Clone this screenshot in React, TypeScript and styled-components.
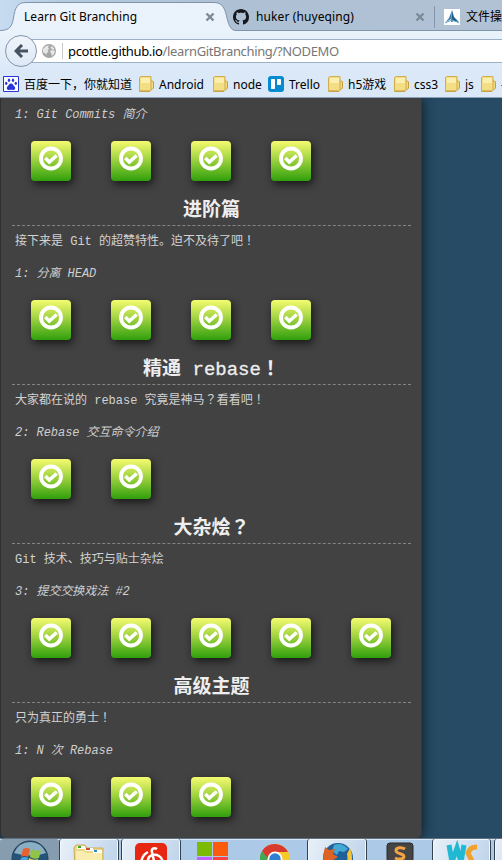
import React from "react";
import styled, { createGlobalStyle } from "styled-components";

const GlobalStyle = createGlobalStyle`
  * { box-sizing: border-box; }
  body { margin: 0; overflow: hidden; background: #274b64; }
`;

const Screen = styled.div`
  width: 502px;
  height: 860px;
  display: flex;
  flex-direction: column;
  overflow: hidden;
  background: #274b64;
  font: 12px/18px "Noto Sans", "Noto Sans CJK SC", sans-serif;
  color: #000;
`;

/* browser chrome */
const TabStrip = styled.div`
  height: 31px;
  flex: none;
  display: flex;
  background: linear-gradient(90deg, #c7dcf1 0, #b6cbe0 60px, #aec0d4 230px, #b1c2d5 100%);
  border-bottom: 1px solid #7f95ae;
`;
const ActiveTab = styled.div`
  position: relative;
  width: 233px;
  height: 31px;
  flex: none;
  display: flex;
  align-items: center;
  padding: 3px 0 0 24px;
`;
const TabShape = styled.svg`
  position: absolute;
  left: 0;
  top: 0;
`;
const Tab = styled.div<{ $w: number }>`
  width: ${(p) => p.$w}px;
  flex: none;
  height: 30px;
  display: flex;
  align-items: center;
  padding-top: 3px;
  white-space: nowrap;
`;
const TabTitle = styled.span<{ $w: number; $ls?: number }>`
  position: relative;
  width: ${(p) => p.$w}px;
  flex: none;
  white-space: nowrap;
  letter-spacing: ${(p) => p.$ls ?? 0}px;
`;
const Glyph = styled.svg<{ $mr?: number }>`
  position: relative;
  display: block;
  flex: none;
  margin-right: ${(p) => p.$mr ?? 0}px;
`;
const TabDivider = styled.i`
  width: 1px;
  height: 22px;
  margin: 0 9px 0 9px;
  background: #8696aa;
`;

const NavBar = styled.div`
  height: 39px;
  flex: none;
  display: flex;
  align-items: center;
  padding-left: 5px;
  background: linear-gradient(#eaf2fb, #dce9f7);
`;
const BackButton = styled.div`
  position: relative;
  z-index: 1;
  width: 32px;
  height: 32px;
  border: 1px solid #8496ab;
  border-radius: 50%;
  background: linear-gradient(#f0f5fb, #dce8f5);
  display: grid;
  place-items: center;
  flex: none;
`;
const UrlBox = styled.div`
  flex: 1;
  height: 24px;
  margin-left: -10px;
  padding-left: 15px;
  display: flex;
  align-items: center;
  border: solid #9bb1c8;
  border-width: 1px 0;
  background: #fff;
`;
const UrlDivider = styled.i`
  width: 1px;
  height: 16px;
  margin: 0 5px 0 6px;
  background: #c8c8c8;
`;
const Url = styled.span`
  font-size: 13px;
  letter-spacing: -0.35px;
  padding-top: 1px;
  color: #777;
  white-space: nowrap;
  b { font-weight: 400; color: #000; }
`;

const Bookmarks = styled.div`
  height: 28px;
  flex: none;
  display: flex;
  align-items: center;
  padding: 1px 0 0 3px;
  overflow: hidden;
  background: #dae8f7;
  border-bottom: 1px solid #8aa0b6;
`;
const Bookmark = styled.div<{ $w: number }>`
  width: ${(p) => p.$w}px;
  flex: none;
  display: flex;
  align-items: center;
  white-space: nowrap;
`;
const BookmarkLabel = styled.span`
  padding-top: 1px;
`;

/* level list */
const Page = styled.main`
  height: 740px;
  flex: none;
  background: #274b64;
  overflow: hidden;
`;
const Panel = styled.section`
  width: 422px;
  height: 740px;
  padding: 7px 11px 0 11px;
  background: #424242;
  border-left: 1px solid #303030;
  border-right: 1px solid #383838;
  border-radius: 0 0 5px 5px;
  box-shadow: 0 0 13px #071722;
  font: 12px/20px "Liberation Mono", "Noto Sans CJK SC", monospace;
  color: #d2d2d2;
`;
const Sequence = styled.article<{ $first?: boolean }>`
  height: ${(p) => (p.$first ? 91 : 159)}px;
`;
const Heading = styled.h3`
  margin: 0;
  width: 399px;
  height: 30px;
  padding-top: 2px;
  border-bottom: 1px dashed #848484;
  font-size: 19px;
  line-height: 26px;
  font-weight: 700;
  color: #eee;
  text-align: center;
  white-space: pre;
`;
const Latin = styled.span`
  font-weight: 400;
  -webkit-text-stroke: 0.3px #eee;
`;
const Mark = styled.span`
  font-family: "Noto Sans CJK TC", sans-serif;
  line-height: 0;
`;
const About = styled.p`
  margin: 0;
  height: 38px;
  padding: 6px 0 0 3px;
  white-space: pre;
`;
const LevelName = styled.p`
  margin: 0;
  height: 20px;
  padding-left: 3px;
  font-style: italic;
  letter-spacing: -0.04px;
  color: #cfcfcf;
  white-space: pre;
`;
const Levels = styled.div`
  display: flex;
  gap: 40px;
  padding: 16px 0 0 19px;
`;
const Level = styled.div`
  width: 40px;
  height: 40px;
  flex: none;
  display: flex;
  justify-content: center;
  padding-top: 5px;
  border-radius: 4px;
  background: linear-gradient(#f5fb70, #a5d543 43%, #309f0c);
  box-shadow: 2px 3px 9px rgba(0, 0, 0, 0.68);
`;

/* taskbar */
const Taskbar = styled.footer`
  height: 22px;
  flex: none;
  display: flex;
  overflow: hidden;
  background: #acc9e7;
  border-top: 1px solid #5d7183;
  box-shadow: inset 0 1px #d8e7f5;
`;
const Task = styled.div<{ $w: number; $open?: boolean; $start?: boolean }>`
  width: ${(p) => p.$w}px;
  height: 30px;
  flex: none;
  display: flex;
  justify-content: center;
  padding-top: 1px;
  border: solid ${(p) => (p.$open ? "#34424f" : "transparent")};
  border-width: 0 1px;
  border-radius: 3px 3px 0 0;
  background: ${(p) =>
    p.$start ? "#869caf" : p.$open ? "linear-gradient(110deg, #e8f0f8, #bdd3ea)" : "transparent"};
  box-shadow: ${(p) => (p.$open ? "inset 0 0 0 1px #f2f7fb" : "none")};
`;

const Close = () => (
  <Glyph width="10" height="10" viewBox="0 0 10 10">
    <path d="M1.5 1.5L8.5 8.5M8.5 1.5L1.5 8.5" stroke="#7c8997" strokeWidth="2.4" />
  </Glyph>
);

const Folder = () => (
  <Glyph $mr={4} width="16" height="16" viewBox="0 0 16 16">
    <path d="M11 5h2.500l1 1v6l-1.500 1.500h-2" fill="#f3d979" stroke="#c59d3a" />
    <path d="M.5 1.500L2 .5h10v14l-1 1H.5z" fill="#f3de86" stroke="#d0ad50" />
    <path d="M2 2h9v5H2z" fill="#fbefae" />
    <path d="M1 15h10" stroke="#bf963c" />
  </Glyph>
);

const Done = () => (
  <svg width="26" height="26" viewBox="0 0 26 26" fill="none" stroke="#fff">
    <circle cx="13" cy="12.5" r="10" strokeWidth="3.8" />
    <path d="M7.300 12l4 4 7.400-6.500" strokeWidth="3.5" />
  </svg>
);

/* full-width ！ and ？ sit in the middle of their cell */
const withMarks = (text: string) =>
  text.split(/([！？])/).map((part, i) => (/[！？]/.test(part) ? <Mark key={i}>{part}</Mark> : part));

type SequenceData = { title?: React.ReactNode; about?: string; name: string; count: number };
const sequences: SequenceData[] = [
  { name: "1: Git Commits 简介", count: 4 },
  { title: "进阶篇", about: "接下来是 Git 的超赞特性。迫不及待了吧！", name: "1: 分离 HEAD", count: 4 },
  {
    title: <>精通<Latin> rebase</Latin><Mark>！</Mark></>,
    about: "大家都在说的 rebase 究竟是神马？看看吧！",
    name: "2: Rebase 交互命令介绍",
    count: 2,
  },
  { title: <>大杂烩<Mark>？</Mark></>, about: "Git 技术、技巧与贴士杂烩", name: "3: 提交交换戏法 #2", count: 5 },
  { title: "高级主题", about: "只为真正的勇士！", name: "1: N 次 Rebase", count: 3 },
];

const folders: [string, number][] = [
  ["Android", 74],
  ["node", 55],
];
const moreFolders: [string, number][] = [
  ["h5游戏", 66],
  ["css3", 51],
  ["js", 36],
  ["-", 40],
];

export default function App() {
  return (
    <Screen>
      <GlobalStyle />
      <TabStrip>
        <ActiveTab>
          <TabShape width="236" height="31" viewBox="0 0 236 31">
            <path
              d="M0 30.5C10 30.5 12 26 13.5 18C15 8 17 2.500 26 2.500H214C223 2.500 225 9 227 18C229 26 231 30.500 236 30.500V31H0Z"
              fill="#eaf2fb"
            />
            <path
              d="M0 30.500C10 30.500 12 26 13.500 18C15 8 17 2.500 26 2.500H214C223 2.500 225 9 227 18C229 26 231 30.500 236 30.500"
              fill="none"
              stroke="#8094ab"
            />
          </TabShape>
          <TabTitle $w={181} $ls={0.04}>Learn Git Branching</TabTitle>
          <Close />
        </ActiveTab>
        <Tab $w={269}>
          <Glyph $mr={7} width="16" height="16" viewBox="0 0 16 16">
            <path
              fill="#15191d"
              d="M8 0C3.58 0 0 3.58 0 8c0 3.54 2.29 6.53 5.47 7.59.4.07.55-.17.55-.38 0-.19-.01-.82-.01-1.49-2.01.37-2.53-.49-2.69-.94-.09-.23-.48-.94-.82-1.13-.28-.15-.68-.52-.01-.53.63-.01 1.08.58 1.23.82.72 1.21 1.87.87 2.33.66.07-.52.28-.87.51-1.07-1.78-.2-3.64-.89-3.64-3.95 0-.87.31-1.59.82-2.15-.08-.2-.36-1.02.08-2.12 0 0 .67-.21 2.2.82.64-.18 1.32-.27 2-.27s1.36.09 2 .27c1.53-1.04 2.2-.82 2.2-.82.44 1.1.16 1.92.08 2.12.51.56.82 1.27.82 2.15 0 3.07-1.87 3.75-3.65 3.95.29.25.54.73.54 1.48 0 1.07-.01 1.93-.01 2.2 0 .21.15.46.55.38A8.01 8.01 0 0016 8c0-4.420-3.580-8-8-8z"
            />
          </Glyph>
          <TabTitle $w={159} $ls={0.1}>huker (huyeqing)</TabTitle>
          <Close />
          <TabDivider />
          <Glyph $mr={6} width="16" height="16" viewBox="0 0 16 16">
            <path d="M0 0h16v16H0z" fill="#fff" />
            <path d="M8 1L7 10l-6 4 4-5z" fill="#3e82ad" />
            <path d="M8 1l2 7 5 5-5-1-3 1z" fill="#215f8c" />
            <path d="M1 14l7-3 7 3" fill="none" stroke="#6bb0cd" />
          </Glyph>
          <span>文件操</span>
        </Tab>
      </TabStrip>
      <NavBar>
        <BackButton>
          <svg width="14" height="14" viewBox="0 0 14 14" fill="none" stroke="#46525f" strokeWidth="3">
            <path d="M8 1L2 7l6 6M2.500 7H14" />
          </svg>
        </BackButton>
        <UrlBox>
          <Glyph width="14" height="14" viewBox="0 0 14 14">
            <circle cx="7" cy="7" r="7" fill="#a5a5a5" />
            <path d="M1 8l0-3 3-3 3-.5-1 2.500 1.500 1-2 1 1 2-2 1 0 2-2-2zM10 2l2.500 3-1 1-2-1-1-2zM8 7l2-1 3 1-1 3-2 2-1-3z" fill="#e7e7e7" />
          </Glyph>
          <UrlDivider />
          <Url><b>pcottle.github.io</b>/learnGitBranching/?NODEMO</Url>
        </UrlBox>
      </NavBar>
      <Bookmarks>
        <Bookmark $w={136}>
          <Glyph $mr={5} width="16" height="16" viewBox="0 0 16 16">
            <path d="M.5.5h15v15H.5z" fill="#fff" stroke="#2836d8" />
            <g fill="#2836d8">
              <path d="M8 7.500c2 0 2 1.500 3.500 3 1.500 1.500.5 3.500-1.500 3.500-2-.5-2-.5-4 0-2 0-3-2-1.500-3.500C6 9 6 7.500 8 7.500z" />
              <ellipse cx="3.200" cy="7.300" rx="1.200" ry="1.600" />
              <ellipse cx="6" cy="4.300" rx="1.200" ry="1.800" />
              <ellipse cx="10" cy="4.300" rx="1.200" ry="1.800" />
              <ellipse cx="12.800" cy="7.300" rx="1.200" ry="1.600" />
            </g>
          </Glyph>
          <BookmarkLabel>百度一下，你就知道</BookmarkLabel>
        </Bookmark>
        {folders.map(([name, w]) => (
          <Bookmark key={name} $w={w}><Folder /><BookmarkLabel>{name}</BookmarkLabel></Bookmark>
        ))}
        <Bookmark $w={60}>
          <Glyph $mr={5} width="16" height="16" viewBox="0 0 16 16">
            <rect width="16" height="16" rx="3" fill="#078bd0" />
            <rect x="3" y="3" width="4" height="10" rx=".7" fill="#fff" />
            <rect x="9" y="3" width="4" height="6" rx=".7" fill="#fff" />
          </Glyph>
          <BookmarkLabel>Trello</BookmarkLabel>
        </Bookmark>
        {moreFolders.map(([name, w]) => (
          <Bookmark key={name} $w={w}><Folder /><BookmarkLabel>{name}</BookmarkLabel></Bookmark>
        ))}
      </Bookmarks>

      <Page>
        <Panel>
          {sequences.map((s, i) => (
            <Sequence key={i} $first={i === 0}>
              {s.title && <Heading>{s.title}</Heading>}
              {s.about && <About>{withMarks(s.about)}</About>}
              <LevelName>{s.name}</LevelName>
              <Levels>
                {Array.from({ length: s.count }, (_, n) => (
                  <Level key={n}><Done /></Level>
                ))}
              </Levels>
            </Sequence>
          ))}
        </Panel>
      </Page>

      <Taskbar>
        <Task $w={59} $start>
          <svg width="38" height="38" viewBox="0 0 38 38">
            <circle cx="19" cy="19" r="18" fill="#245477" stroke="#253f55" />
            <path d="M3 13Q8 2 19 2t16 11q-14 5-32 0z" fill="#8aafc4" />
            <path d="M12 9q4-2 7 0l-2 8q-4-2-7 0z" fill="#e9602d" />
            <path d="M20 9q5 3 10 1l-2 8q-5 2-9-1z" fill="#91c444" />
            <path d="M10 18q4-2 7 0l-2 8H8z" fill="#49a5df" />
            <path d="M18 18q5 3 9 1l-2 8h-9z" fill="#f8cf4a" />
          </svg>
        </Task>
        <Task $w={60} $open>
          <svg width="34" height="30" viewBox="0 0 34 30">
            <path d="M2 8l2-3h9l2 3h16v22H3z" fill="#edd783" stroke="#c9ae5e" />
            <path d="M5 6h8v3H5zM13 8h8v3h-8zM21 10h9v3h-9z" fill="#fff" />
            <path d="M6 6h3v2H6z" fill="#2ea82e" />
            <path d="M14 8h4v2h-4z" fill="#d14a36" />
            <path d="M22 10h3v2h-3z" fill="#258bd1" />
            <path d="M4 11h8l2 2h16v17H4z" fill="#faedb0" />
          </svg>
        </Task>
        <Task $w={2} />
        <Task $w={60} $open>
          <svg width="32" height="30" viewBox="0 0 32 30">
            <rect y="3" width="32" height="32" rx="5" fill="#e62712" />
            <path d="M22 9c-3-2-6 0-5 3l2 9c0 3-6 3-6-1s6-7 11-4 4 9 1 12M13 12c-6 3-9 11-4 16" fill="none" stroke="#fff" strokeWidth="2.500" />
          </svg>
        </Task>
        <Task $w={62}>
          <svg width="31" height="31" viewBox="0 0 31 31">
            <path d="M0 2h15v14H0z" fill="#7cba04" />
            <path d="M16 2h15v14H16z" fill="#fc5a0c" />
            <path d="M0 17h15v14H0z" fill="#c062ff" />
            <path d="M16 17h15v14H16z" fill="#ff4040" />
          </svg>
        </Task>
        <Task $w={64}>
          <svg width="30" height="34" viewBox="0 0 30 34">
            <circle cx="15" cy="19" r="15" fill="#f4cb27" />
            <path d="M2 11a15 15 0 008 22l5-9z" fill="#42a853" />
            <path d="M2 11A15 15 0 0128 12H15l-5 9z" fill="#d93a30" />
            <circle cx="15" cy="19" r="7.500" fill="#fff" />
            <circle cx="15" cy="19" r="5.700" fill="#317fd1" />
          </svg>
        </Task>
        <Task $w={60} $open>
          <svg width="32" height="34" viewBox="0 0 32 34">
            <circle cx="17" cy="18" r="15" fill="#1e609a" />
            <path d="M13 5q8-3 14 4l-4 3-5-1-2 4-5-4z" fill="#44a8d5" />
            <path d="M29 8q4 9 0 20l-7 4q6-10 4-18z" fill="#f5c338" />
            <path d="M4 7l4 3 6-1-2 5 5 3-5 3 4 7 9-2-5 8H8Q-1 24 4 7z" fill="#dc6226" />
          </svg>
        </Task>
        <Task $w={65}>
          <svg width="30" height="32" viewBox="0 0 30 32">
            <path d="M3 4h24l3 28H0z" fill="#eee" />
            <rect x="2" y="3" width="26" height="32" rx="3" fill="#454545" stroke="#282828" />
            <path d="M20 9c-3-2-9-2-9 1.500 0 4 8 2.500 8 6 0 3-6 3-9 1.500" fill="none" stroke="#f4a344" strokeWidth="3" />
          </svg>
        </Task>
        <Task $w={59} $open>
          <svg width="32" height="30" viewBox="0 0 32 30">
            <path d="M3 5l3 17 5-14 4 14 3-17" fill="none" stroke="#20b9d4" strokeWidth="5" />
            <path d="M31 7c-6 0-7 2-9 6l7 14" fill="none" stroke="#f2a12d" strokeWidth="5" />
          </svg>
        </Task>
        <Task $w={3} />
        <Task $w={40} $open />
      </Taskbar>
    </Screen>
  );
}
